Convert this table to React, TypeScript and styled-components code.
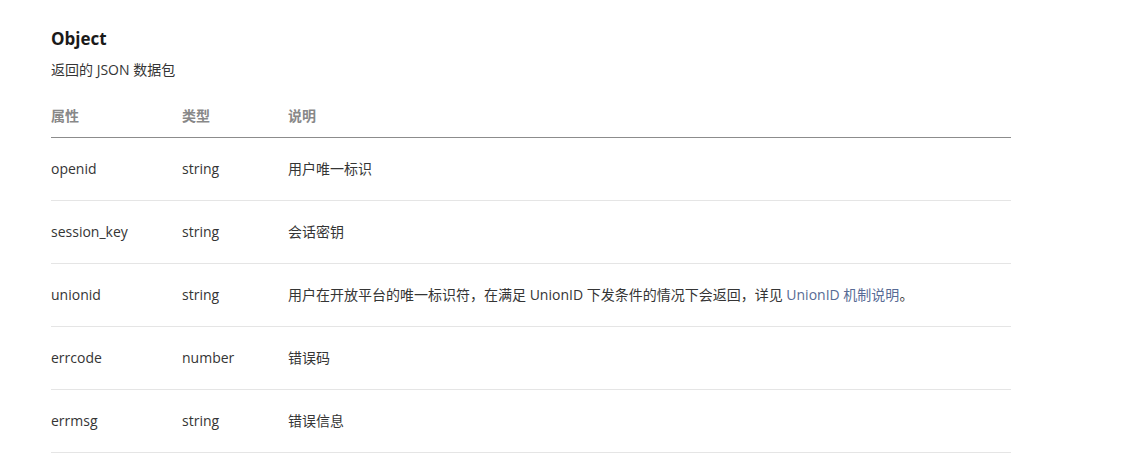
import React from "react";
import styled, { createGlobalStyle } from "styled-components";

const Global = createGlobalStyle`
  html, body { margin: 0; padding: 0; background: #fff; }
  body {
    font-family: "Open Sans", "Noto Sans CJK SC", sans-serif;
    color: #353535;
    -webkit-font-smoothing: antialiased;
  }
`;

const Page = styled.div`
  padding: 27px 0 0 51px;
`;

const Title = styled.h3`
  margin: 0;
  font-size: 17px;
  line-height: 24px;
  font-weight: 700;
  color: #1a1a1a;
`;

const Desc = styled.p`
  margin: 9px 0 0;
  font-size: 14px;
  line-height: 20px;
`;

const Table = styled.table`
  margin-top: 15px;
  width: 960px;
  border-collapse: collapse;
  font-size: 14px;
  line-height: 20px;
`;

const Th = styled.th<{ $w?: number }>`
  text-align: left;
  font-weight: 700;
  color: #888;
  padding: 11px 0 11px;
  border-bottom: 1px solid #8c8c8c;
  width: ${(p) => (p.$w ? `${p.$w}px` : "auto")};
`;

const Td = styled.td`
  padding: 21px 0;
  border-bottom: 1px solid #e5e5e5;
  vertical-align: middle;
`;

const Link = styled.a`
  color: #576b95;
  text-decoration: none;
`;

const rows: { name: string; type: string; desc: React.ReactNode }[] = [
  { name: "openid", type: "string", desc: "用户唯一标识" },
  { name: "session_key", type: "string", desc: "会话密钥" },
  {
    name: "unionid",
    type: "string",
    desc: (
      <>
        用户在开放平台的唯一标识符，在满足 UnionID 下发条件的情况下会返回，详见{" "}
        <Link href="#">UnionID 机制说明</Link>。
      </>
    ),
  },
  { name: "errcode", type: "number", desc: "错误码" },
  { name: "errmsg", type: "string", desc: "错误信息" },
];

export default function App() {
  return (
    <Page>
      <Global />
      <Title>Object</Title>
      <Desc>返回的 JSON 数据包</Desc>
      <Table>
        <thead>
          <tr>
            <Th $w={131}>属性</Th>
            <Th $w={106}>类型</Th>
            <Th>说明</Th>
          </tr>
        </thead>
        <tbody>
          {rows.map((r) => (
            <tr key={r.name}>
              <Td>{r.name}</Td>
              <Td>{r.type}</Td>
              <Td>{r.desc}</Td>
            </tr>
          ))}
        </tbody>
      </Table>
    </Page>
  );
}
